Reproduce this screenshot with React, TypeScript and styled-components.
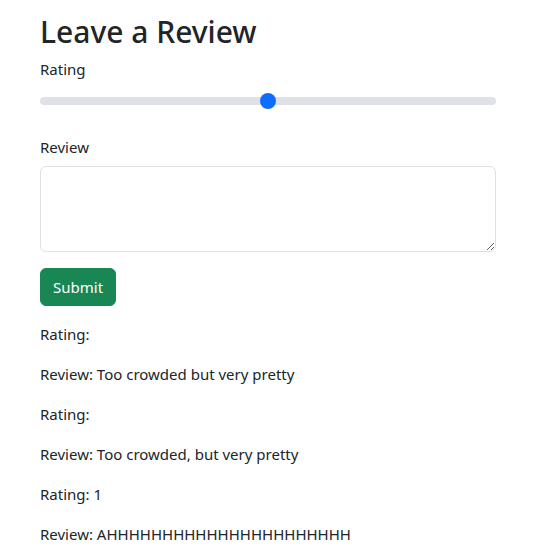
import React from "react";
import styled, { createGlobalStyle } from "styled-components";

const Global = createGlobalStyle`
  html, body { margin: 0; padding: 0; background: #fff; }
  body {
    font-family: "Noto Sans", "Open Sans", sans-serif;
    font-size: 16px;
    line-height: 1.5;
    color: #212529;
  }
  * { box-sizing: border-box; }
`;

const Page = styled.div`
  padding: 14px 48px 0 40px;
  width: 544px;
`;

const Title = styled.h1`
  margin: 0 0 8px;
  font-size: 30px;
  font-weight: 500;
  line-height: 1.2;
`;

const Label = styled.label`
  display: block;
  margin-bottom: 8px;
  font-size: 15px;
`;

const Field = styled.div<{ $gap: number }>`
  margin-bottom: ${(p) => p.$gap}px;
`;

const Range = styled.input`
  display: block;
  width: 100%;
  height: 24px;
  margin: 0;
  padding: 0;
  background: transparent;
  appearance: none;
  -webkit-appearance: none;
  &::-webkit-slider-runnable-track {
    height: 8px;
    border-radius: 16px;
    background: #dee2e6;
  }
  &::-webkit-slider-thumb {
    -webkit-appearance: none;
    width: 16px;
    height: 16px;
    margin-top: -4px;
    border: 0;
    border-radius: 50%;
    background: #0d6efd;
  }
`;

const TextArea = styled.textarea`
  display: block;
  width: 100%;
  height: 86px;
  padding: 6px 12px;
  font: inherit;
  color: #212529;
  border: 1px solid #dee2e6;
  border-radius: 6px;
  resize: vertical;
`;

const Button = styled.button`
  display: inline-block;
  padding: 6px 12px;
  font-family: inherit;
  font-size: 15px;
  line-height: 24px;
  color: #fff;
  background: #198754;
  border: 1px solid #198754;
  border-radius: 6px;
  margin-bottom: 16px;
`;

const Entry = styled.p`
  margin: 0 0 16px;
  font-size: 15px;
  line-height: 24px;
`;

const entries = [
  ["Rating:", "Review: Too crowded but very pretty"],
  ["Rating:", "Review: Too crowded, but very pretty"],
  ["Rating: 1", "Review: AHHHHHHHHHHHHHHHHHHHHHH"],
];

export default function App() {
  return (
    <>
      <Global />
      <Page>
        <Title>Leave a Review</Title>
        <Field $gap={23}>
          <Label>Rating</Label>
          <Range type="range" min={0} max={10} defaultValue={5} />
        </Field>
        <Field $gap={16}>
          <Label>Review</Label>
          <TextArea />
        </Field>
        <Button>Submit</Button>
        {entries.map(([r, v], i) => (
          <React.Fragment key={i}>
            <Entry>{r}</Entry>
            <Entry>{v}</Entry>
          </React.Fragment>
        ))}
      </Page>
    </>
  );
}
